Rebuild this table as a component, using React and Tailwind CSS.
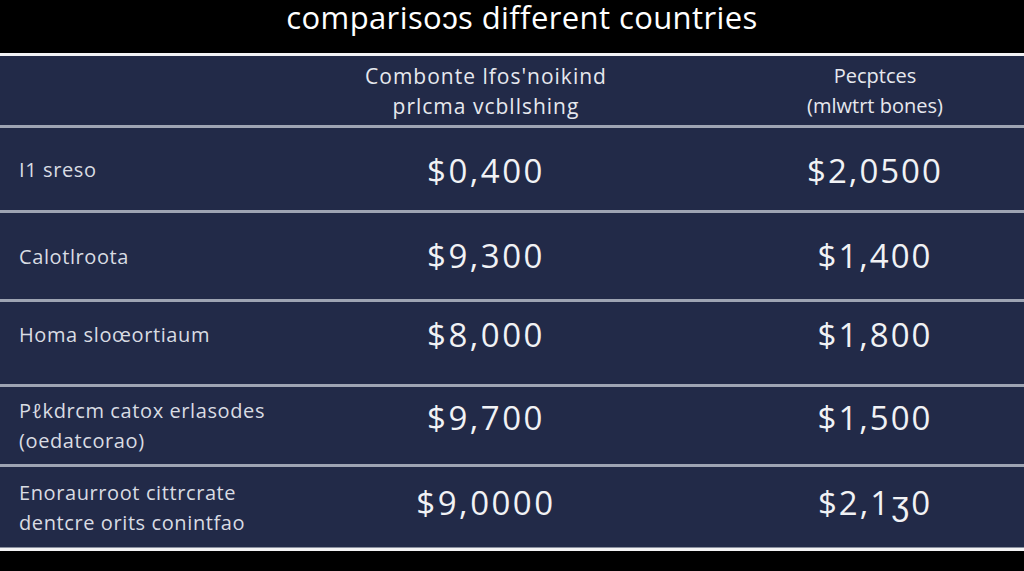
export default function App() {
  const rows = [
    { label: ["I1 sreso"], a: "$0,400", b: "$2,0500", h: "h-[82px]", lp: "pt-[2px]", vp: "pt-[4px]" },
    { label: ["Calotlroota"], a: "$9,300", b: "$1,400", h: "h-[86px]", lp: "pt-[2px]", vp: "pt-[0px]" },
    { label: ["Homa sloœortiaum"], a: "$8,000", b: "$1,800", h: "h-[82px]", lp: "pb-[16px]", vp: "pb-[16px]" },
    { label: ["Pℓkdrcm catox erlasodes", "(oedatcorao)"], a: "$9,700", b: "$1,500", h: "h-[77px]", lp: "pb-[0px]", vp: "pb-[15px]" },
    { label: ["Enoraurroot cittrcrate", "dentcre orits conintfao"], a: "$9,0000", b: "$2,1ʒ0", h: "h-[80px]", lp: "pt-[2px]", vp: "pb-[8px]" },
  ];
  return (
    <div className="w-[1024px] h-[571px] bg-black overflow-hidden" style={{ fontFamily: "'Open Sans', 'Liberation Sans', sans-serif" }}>
      <div className="h-[53px] flex justify-center">
        <div className="text-[31px] leading-[32px] text-white tracking-[0.4px] pl-[20px] pt-[1px]">comparisoɔs different countries</div>
      </div>
      <div className="h-[3px] bg-[#f2f2f4]" />
      <div className="bg-[#222a48]">
        <div className="h-[69px] grid grid-cols-[246px_480px_298px] items-center">
          <div />
          <div className="text-center text-[21px] leading-[30px] text-[#e6e8ee] tracking-[1px]">
            <div>Combonte lfos'noikind</div>
            <div>prlcma vcbllshing</div>
          </div>
          <div className="text-center text-[20px] leading-[30px] text-[#e6e8ee] tracking-[0px]">
            <div>Pecptces</div>
            <div>(mlwtrt bones)</div>
          </div>
        </div>
        {rows.map((r, i) => (
          <div key={i}>
            <div className="h-[3px] bg-[#9ea4b3]" />
            <div className={`${r.h} grid grid-cols-[246px_480px_298px] items-center`}>
              <div className={`${r.lp} pl-[19px] text-[20px] leading-[30px] text-[#d9dce3] tracking-[0.6px] whitespace-nowrap`}>
                {r.label.map((l, j) => (
                  <div key={j}>{l}</div>
                ))}
              </div>
              <div className={`${r.vp} text-center text-[33px] leading-[40px] text-[#f1f2f5] tracking-[2.5px]`}>{r.a}</div>
              <div className={`${r.vp} text-center text-[33px] leading-[40px] text-[#f1f2f5] tracking-[2px]`}>{r.b}</div>
            </div>
          </div>
        ))}
      </div>
      <div className="h-[1px] bg-[#8a90a0]" />
      <div className="h-[3px] bg-[#f2f2f4]" />
    </div>
  );
}
